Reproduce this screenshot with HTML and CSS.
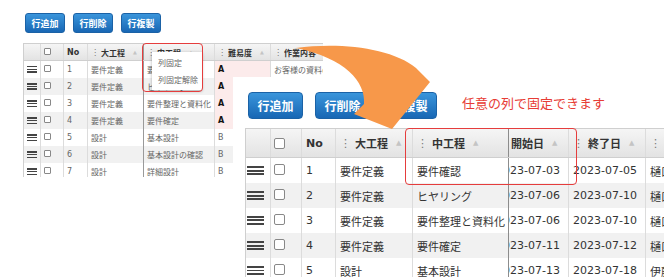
FILE: index.html
```html
<!DOCTYPE html>
<html lang="ja">
<head>
    <meta charset="UTF-8">
    <meta name="viewport" content="width=device-width, initial-scale=1.0">
    <title>列固定</title>
    <link rel="stylesheet" href="styles.css">
</head>
<body>
<div class="canvas">

    <!-- Small screenshot: column menu -->
    <section class="shot shot-small">
        <div class="toolbar">
            <button class="btn">行追加</button>
            <button class="btn">行削除</button>
            <button class="btn">行複製</button>
        </div>
        <div class="grid">
            <div class="row head">
                <div class="cell handle"></div>
                <div class="cell chk"><span class="box"></span></div>
                <div class="cell no">No</div>
                <div class="cell major frozen"><span class="dots">⋮</span>大工程<span class="sort">▲</span></div>
                <div class="cell minor"><span class="dots">⋮</span>中工程<span class="sort">▲</span></div>
                <div class="cell level"><span class="dots">⋮</span>難易度<span class="sort">▲</span></div>
                <div class="cell work"><span class="dots">⋮</span>作業内容</div>
            </div>
            <div class="row">
                <div class="cell handle"><span class="bars"></span></div>
                <div class="cell chk"><span class="box"></span></div>
                <div class="cell no">1</div>
                <div class="cell major frozen">要件定義</div>
                <div class="cell minor">要件確認</div>
                <div class="cell level hot">A</div>
                <div class="cell work">お客様の資料の確認</div>
            </div>
            <div class="row">
                <div class="cell handle"><span class="bars"></span></div>
                <div class="cell chk"><span class="box"></span></div>
                <div class="cell no">2</div>
                <div class="cell major frozen">要件定義</div>
                <div class="cell minor">ヒヤリング</div>
                <div class="cell level hot">A</div>
                <div class="cell work"></div>
            </div>
            <div class="row">
                <div class="cell handle"><span class="bars"></span></div>
                <div class="cell chk"><span class="box"></span></div>
                <div class="cell no">3</div>
                <div class="cell major frozen">要件定義</div>
                <div class="cell minor">要件整理と資料化</div>
                <div class="cell level hot">A</div>
                <div class="cell work"></div>
            </div>
            <div class="row">
                <div class="cell handle"><span class="bars"></span></div>
                <div class="cell chk"><span class="box"></span></div>
                <div class="cell no">4</div>
                <div class="cell major frozen">要件定義</div>
                <div class="cell minor">要件確定</div>
                <div class="cell level hot">A</div>
                <div class="cell work"></div>
            </div>
            <div class="row">
                <div class="cell handle"><span class="bars"></span></div>
                <div class="cell chk"><span class="box"></span></div>
                <div class="cell no">5</div>
                <div class="cell major frozen">設計</div>
                <div class="cell minor">基本設計</div>
                <div class="cell level">B</div>
                <div class="cell work"></div>
            </div>
            <div class="row">
                <div class="cell handle"><span class="bars"></span></div>
                <div class="cell chk"><span class="box"></span></div>
                <div class="cell no">6</div>
                <div class="cell major frozen">設計</div>
                <div class="cell minor">基本設計の確認</div>
                <div class="cell level">B</div>
                <div class="cell work"></div>
            </div>
            <div class="row">
                <div class="cell handle"><span class="bars"></span></div>
                <div class="cell chk"><span class="box"></span></div>
                <div class="cell no">7</div>
                <div class="cell major frozen">設計</div>
                <div class="cell minor">詳細設計</div>
                <div class="cell level">B</div>
                <div class="cell work"></div>
            </div>
        </div>
    </section>

    <!-- Column menu -->
    <ul class="col-menu">
        <li>列固定</li>
        <li>列固定解除</li>
    </ul>
    <div class="mark mark-small"></div>

    <!-- Big screenshot: frozen columns -->
    <section class="shot shot-big">
        <div class="toolbar">
            <button class="btn">行追加</button>
            <button class="btn">行削除</button>
            <button class="btn">行複製</button>
        </div>
        <div class="grid">
            <div class="row head">
                <div class="cell handle"></div>
                <div class="cell chk"><span class="box"></span></div>
                <div class="cell no">No</div>
                <div class="cell major"><span class="dots">⋮</span>大工程<span class="sort">▲</span></div>
                <div class="cell minor frozen"><span class="dots">⋮</span>中工程<span class="sort">▲</span></div>
                <div class="cell start"><span class="shift"><span class="dots">⋮</span>開始日<span class="sort">▲</span></span></div>
                <div class="cell end"><span class="dots">⋮</span>終了日<span class="sort">▲</span></div>
                <div class="cell owner"><span class="dots">⋮</span>担当者</div>
            </div>
            <div class="row">
                <div class="cell handle"><span class="bars"></span></div>
                <div class="cell chk"><span class="box"></span></div>
                <div class="cell no">1</div>
                <div class="cell major">要件定義</div>
                <div class="cell minor frozen">要件確認</div>
                <div class="cell start"><span class="shift">2023-07-03</span></div>
                <div class="cell end">2023-07-05</div>
                <div class="cell owner">樋口</div>
            </div>
            <div class="row">
                <div class="cell handle"><span class="bars"></span></div>
                <div class="cell chk"><span class="box"></span></div>
                <div class="cell no">2</div>
                <div class="cell major">要件定義</div>
                <div class="cell minor frozen">ヒヤリング</div>
                <div class="cell start"><span class="shift">2023-07-06</span></div>
                <div class="cell end">2023-07-10</div>
                <div class="cell owner">樋口</div>
            </div>
            <div class="row">
                <div class="cell handle"><span class="bars"></span></div>
                <div class="cell chk"><span class="box"></span></div>
                <div class="cell no">3</div>
                <div class="cell major">要件定義</div>
                <div class="cell minor frozen">要件整理と資料化</div>
                <div class="cell start"><span class="shift">2023-07-06</span></div>
                <div class="cell end">2023-07-10</div>
                <div class="cell owner">樋口</div>
            </div>
            <div class="row">
                <div class="cell handle"><span class="bars"></span></div>
                <div class="cell chk"><span class="box"></span></div>
                <div class="cell no">4</div>
                <div class="cell major">要件定義</div>
                <div class="cell minor frozen">要件確定</div>
                <div class="cell start"><span class="shift">2023-07-11</span></div>
                <div class="cell end">2023-07-12</div>
                <div class="cell owner">樋口</div>
            </div>
            <div class="row">
                <div class="cell handle"><span class="bars"></span></div>
                <div class="cell chk"><span class="box"></span></div>
                <div class="cell no">5</div>
                <div class="cell major">設計</div>
                <div class="cell minor frozen">基本設計</div>
                <div class="cell start"><span class="shift">2023-07-13</span></div>
                <div class="cell end">2023-07-18</div>
                <div class="cell owner">伊藤</div>
            </div>
        </div>
    </section>

    <div class="mark mark-big"></div>
    <p class="callout">任意の列で固定できます</p>

    <!-- Orange arrow -->
    <svg class="arrow" width="664" height="277" viewBox="0 0 664 277">
        <path d="M296 48 C340 42 392 48 416 68 L430 82 L392 129 L354 114 L364 104 C366 82 345 58 296 48 Z" fill="#f7984a"/>
    </svg>
</div>
</body>
</html>
```

FILE: styles.css
```css
* {
    box-sizing: border-box;
}

body {
    margin: 0;
    background: #fff;
    font-family: "DejaVu Sans", "Noto Sans CJK JP", sans-serif;
}

.canvas {
    position: relative;
    width: 664px;
    height: 277px;
    overflow: hidden;
}

/* Buttons */
.toolbar {
    display: flex;
}

.btn {
    padding: 0;
    border: 1px solid #1b62a6;
    border-radius: 4px;
    background: linear-gradient(#3a95db, #1867b4);
    color: #fff;
    font-family: "Noto Sans CJK JP", sans-serif;
    font-weight: bold;
}

/* Grid */
.row {
    display: flex;
}

.cell {
    flex: none;
    display: flex;
    align-items: center;
    overflow: hidden;
    white-space: nowrap;
    border-right: 1px solid #dcdcdc;
}

.row:nth-child(odd) .cell {
    background: #f1f1f1;
}

.row .cell.hot {
    background: #fcebeb;
}

.row.head .cell {
    background: linear-gradient(#f5f5f5, #e3e3e3);
    font-weight: bold;
    color: #333;
}

.cell.frozen {
    border-right-color: #9a9a9a;
}

.dots {
    display: inline-block;
    text-align: center;
    color: #777;
    font-weight: normal;
}

.sort {
    color: #c4c4c4;
}

.box {
    display: block;
    border: 1px solid #888;
    background: #fff;
}

.bars {
    display: block;
}

/* Small screenshot */
.shot-small {
    width: 323px;
    height: 177px;
    overflow: hidden;
    padding: 13px 0 0 23px;
}

.shot-small .toolbar {
    gap: 8px;
    margin-left: 2px;
}

.shot-small .btn {
    width: 40px;
    height: 20px;
    font-size: 9px;
    border-radius: 3px;
}

.shot-small .grid {
    width: 380px;
    margin-top: 10px;
    border-left: 1px solid #cfcfcf;
    border-top: 1px solid #cfcfcf;
    font-size: 8px;
    color: #666;
}

.shot-small .row {
    height: 17px;
}

.shot-small .row.head {
    height: 17px;
    border-bottom: 1px solid #cfcfcf;
}

.shot-small .cell {
    padding: 0 3px;
}

.shot-small .handle { width: 17px; justify-content: center; }
.shot-small .chk { width: 23px; }
.shot-small .no { width: 24px; }
.shot-small .major { width: 56px; }
.shot-small .minor { width: 71px; }
.shot-small .level { width: 56px; }
.shot-small .work { width: 150px; }

.shot-small .level.hot {
    color: #111;
    font-weight: bold;
}

.shot-small .dots {
    width: 6px;
    margin-right: 4px;
}

.shot-small .sort {
    margin-left: 8px;
    font-size: 5px;
}

.shot-small .box {
    width: 7px;
    height: 7px;
    border-radius: 1px;
    margin-top: -2px;
}

.shot-small .bars {
    width: 10px;
    height: 7px;
    background: linear-gradient(#444 0 1.5px, transparent 1.5px 2.75px, #444 2.75px 4.25px, transparent 4.25px 5.5px, #444 5.5px 7px);
}

/* Column menu */
.col-menu {
    position: absolute;
    left: 152px;
    top: 52px;
    width: 50px;
    height: 38px;
    margin: 0;
    padding: 2px 0 0 6px;
    list-style: none;
    background: #fff;
    box-shadow: 0 1px 3px rgba(0, 0, 0, 0.3);
    font-family: "Noto Sans CJK JP", sans-serif;
    font-size: 8px;
    color: #666;
}

.col-menu li {
    height: 17px;
    line-height: 17px;
}

/* Red highlight boxes */
.mark {
    position: absolute;
    border: 1.5px solid #e53d3d;
    border-radius: 4px;
}

.mark-small {
    left: 142px;
    top: 43px;
    width: 61px;
    height: 49px;
}

.mark-big {
    left: 405px;
    top: 128px;
    width: 172px;
    height: 57px;
}

/* Big screenshot */
.shot-big {
    position: absolute;
    left: 233px;
    top: 77px;
    right: 0;
    bottom: 0;
    overflow: hidden;
    padding: 15px 0 0 12px;
    background: #fff;
}

.shot-big .toolbar {
    gap: 12px;
    margin-left: 3px;
}

.shot-big .btn {
    width: 55px;
    height: 27px;
    font-size: 12px;
}

.shot-big .grid {
    width: 500px;
    margin-top: 9px;
    border-left: 1px solid #cfcfcf;
    border-top: 1px solid #cfcfcf;
    font-size: 11px;
    color: #333;
}

.shot-big .row {
    height: 25px;
}

.shot-big .row.head {
    height: 29px;
    border-bottom: 1px solid #cfcfcf;
}

.shot-big .cell {
    padding: 0 4px;
}

.shot-big .handle { width: 25px; padding-left: 1px; }
.shot-big .chk { width: 31px; padding-left: 3px; }
.shot-big .no { width: 34px; }
.shot-big .major { width: 77px; }
.shot-big .minor { width: 96px; }
.shot-big .start { width: 60px; }
.shot-big .end { width: 77px; }
.shot-big .owner { width: 90px; }

.shot-big .minor.frozen {
    border-right: 1.5px solid #8c8c8c;
}

.shot-big .shift {
    margin-left: -17px;
    display: flex;
    align-items: center;
}

.shot-big .dots {
    width: 8px;
    margin-right: 7px;
}

.shot-big .sort {
    margin-left: 8px;
    font-size: 7px;
}

.shot-big .box {
    width: 11px;
    height: 11px;
    border-radius: 2px;
}

.shot-big .row:not(.head) .box {
    margin-top: -3px;
}

.shot-big .bars {
    width: 17px;
    height: 9px;
    background: linear-gradient(#444 0 2px, transparent 2px 3.5px, #444 3.5px 5.5px, transparent 5.5px 7px, #444 7px 9px);
}

/* Callout */
.callout {
    position: absolute;
    left: 462px;
    top: 94px;
    margin: 0;
    font-family: "Noto Sans CJK JP", sans-serif;
    font-size: 13px;
    line-height: 18px;
    color: #e73c35;
}

.arrow {
    position: absolute;
    left: 0;
    top: 0;
    pointer-events: none;
}
```
